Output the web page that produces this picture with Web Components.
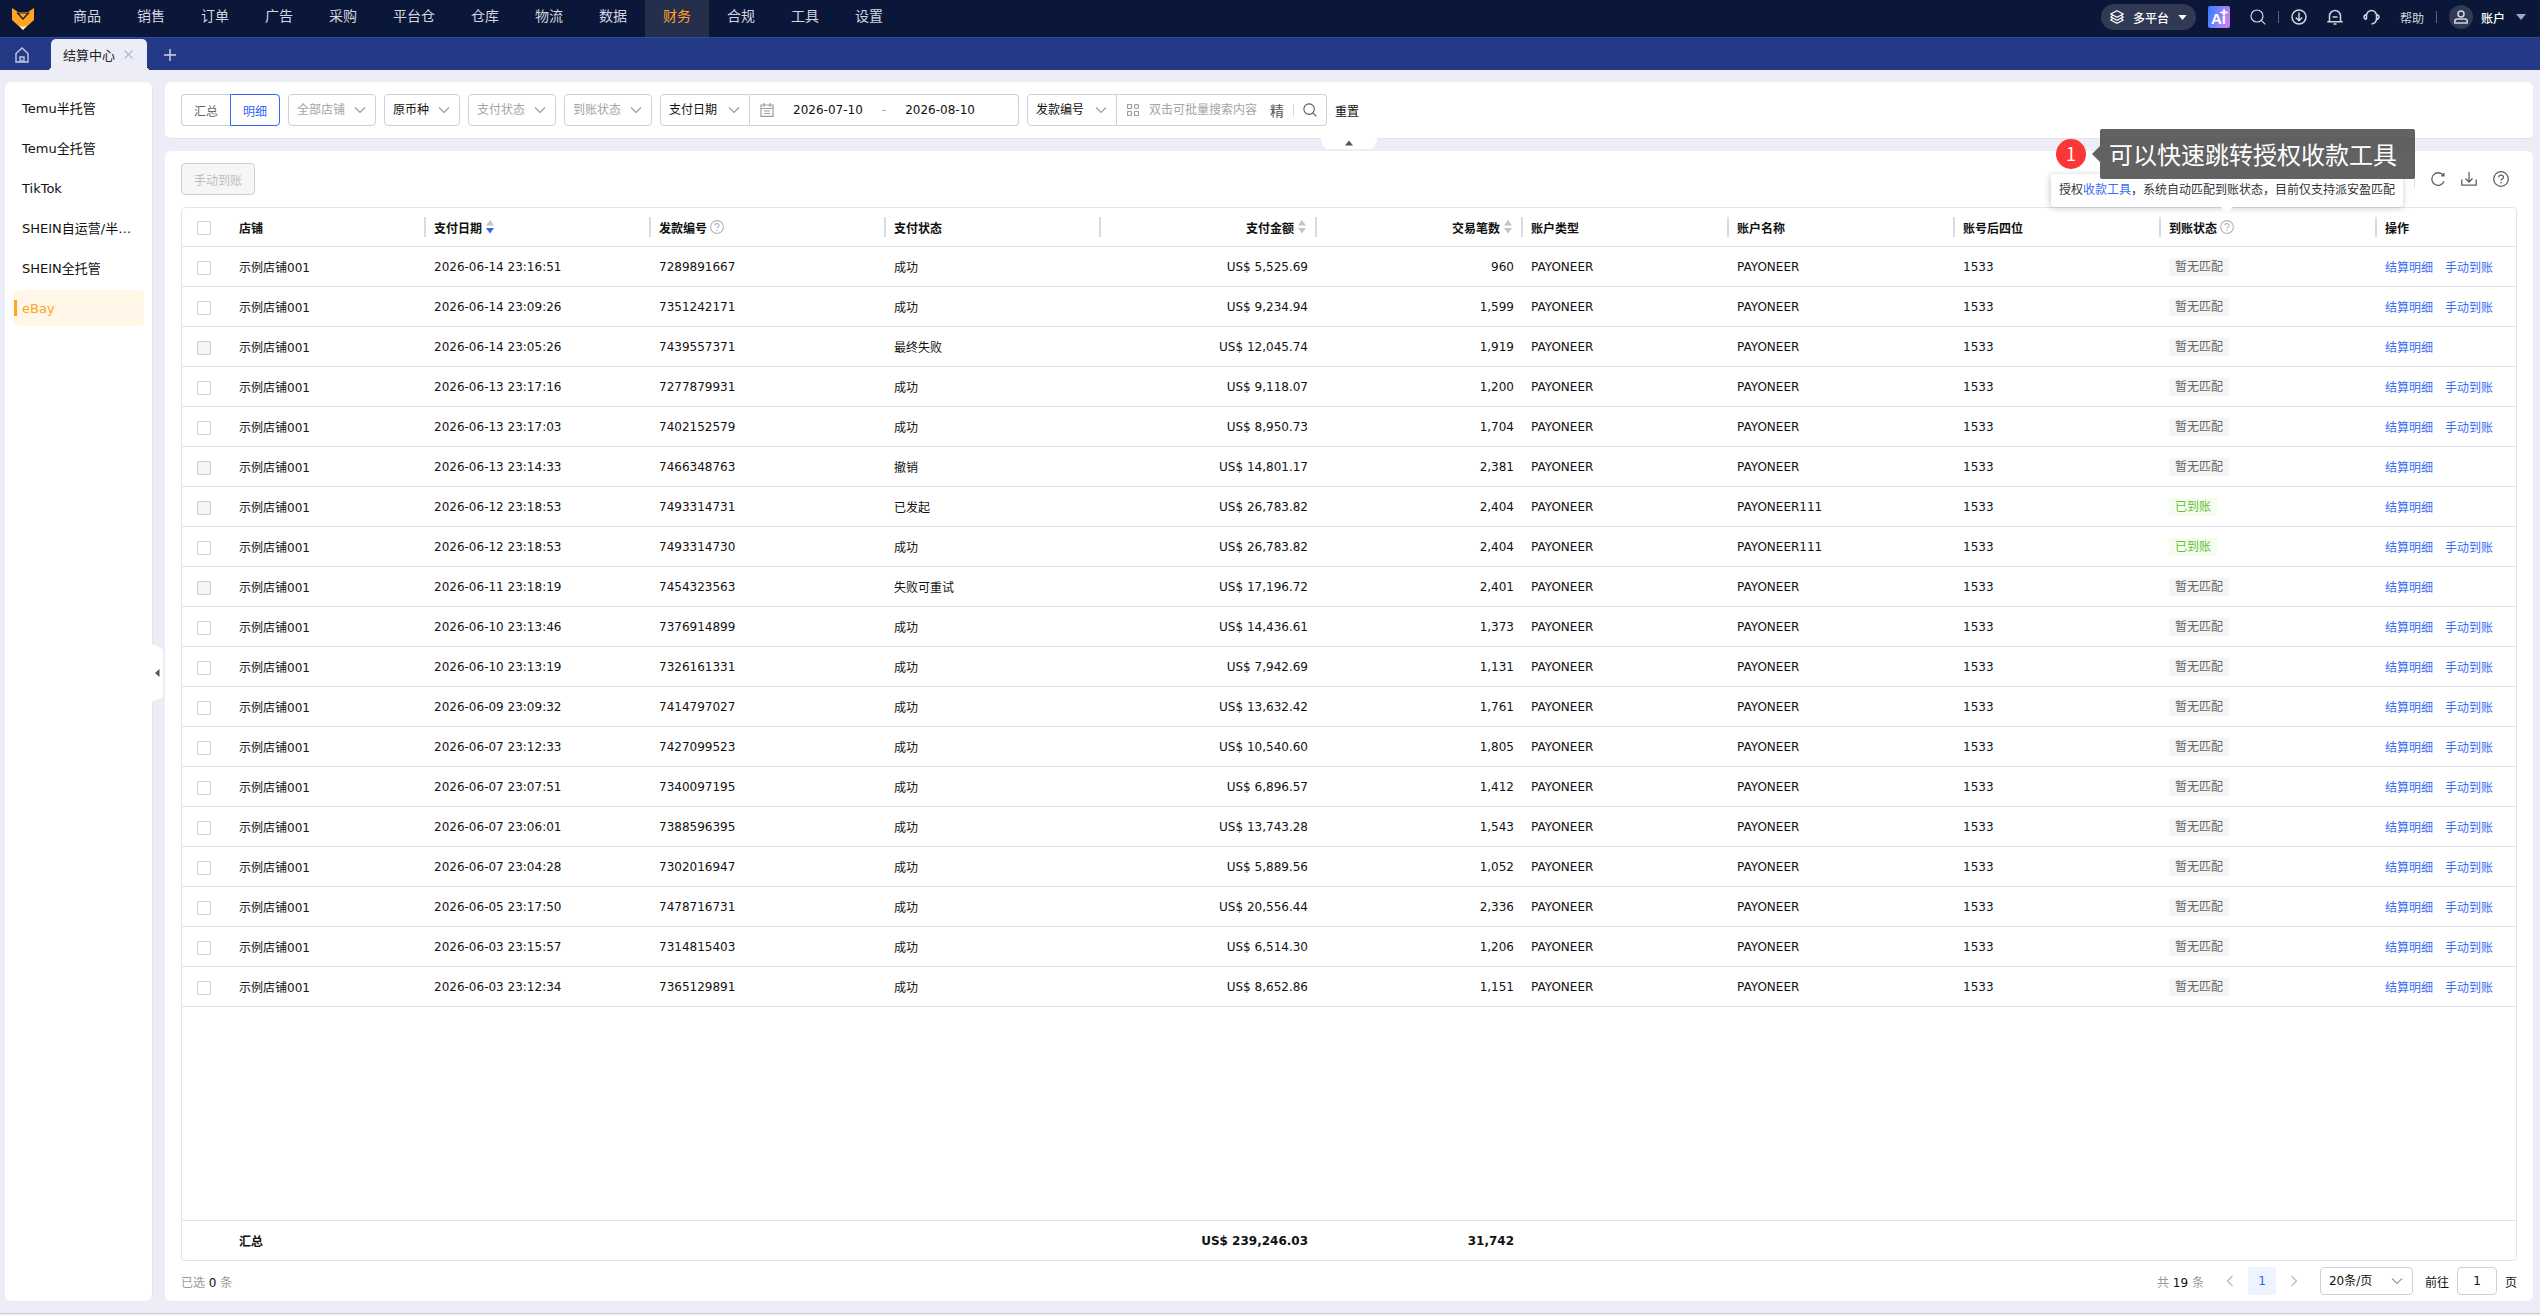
<!DOCTYPE html>
<html lang="zh-CN">
<head>
<meta charset="UTF-8">
<meta name="viewport" content="width=device-width, initial-scale=1">
<title>结算中心</title>
<style>
    html, body {
        margin: 0;
        height: 100%;
    }

    body {
        font-family: "DejaVu Sans", "Noto Sans CJK SC", sans-serif;
        font-size: 12px;
        color: #111;
        background: #ecedf6;
    }
</style>
</head>
<body>
<settlement-page></settlement-page>

<script>
// Shared reset for controls inside every shadow root
const base = `
    * { box-sizing: border-box; }
    button, input, select {
        font: inherit;
        color: inherit;
        margin: 0;
        padding: 0;
        border: 0;
        background: none;
        outline: none;
    }
    button { cursor: pointer; }
    a { color: inherit; text-decoration: none; }
`;

const icons = {
    logo: ['0 0 22 22', `<path fill="#ffa51f" stroke="none" d="M0 0l6 4h10l6-4v12L11 22 0 12z"/><path fill="#fff" stroke="none" d="M7.500 17.500L11 19l3.500-1.500L11 22z"/><path fill="none" stroke="#0b1738" stroke-width="1.2" d="M5.500 5h11L11 11z"/>`],
    home: ['0 0 14 16', `<path d="M1 6.500v8.500h12V6.500L7 1z"/><path d="M5 15v-5h4v5M7 12.500v2.500"/>`],
    close: ['0 0 8 8', `<path d="M.5.5l7 7M7.500.5l-7 7"/>`],
    plus: ['0 0 12 12', `<path d="M6 0v12M0 6h12"/>`],
    layers: ['0 0 14 14', `<path d="M7 .8L13.200 4 7 7.400.8 4zM2.500 5.500L.8 7 7 10.300 13.200 7l-1.700-1.500M2.500 8.500L.8 10 7 13.300 13.200 10l-1.700-1.500"/>`],
    caret: ['0 0 10 6', `<path fill="currentColor" stroke="none" d="M0 0h10L5 6z"/>`],
    search: ['0 0 16 16', `<circle cx="7" cy="7" r="6"/><path d="M11.300 11.300L15.300 15.300"/>`],
    downCircle: ['0 0 16 16', `<circle cx="8" cy="8" r="7"/><path d="M8 3.500v8M4.800 8.500L8 11.700l3.200-3.200"/>`],
    bell: ['0 0 16 16', `<path d="M2.500 12.500V7a5.500 5.500 0 0 1 11 0v5.500M.3 12.800h15.400M5.500 8h5M6.500 15h3"/>`],
    headset: ['0 0 17 16', `<path d="M3.500 10V6.500a5 5 0 0 1 10 0V9.500c0 3-1.500 5-5 5.500M3.500 5.500C1.500 6 1 7 1 8s.5 2 2.500 2.500M13.500 5.500c2 .5 2.500 1.500 2.500 2.500s-.5 2-2.500 2.500"/>`],
    user: ['0 0 14 14', `<circle cx="7" cy="4" r="3"/><path d="M.8 13v-1.500c0-1.500 1-2.500 2.500-2.500h7.400c1.500 0 2.500 1 2.500 2.500V13z"/>`],
    chevron: ['0 0 12 12', `<path d="M1 3.500l5 5 5-5"/>`],
    left: ['0 0 12 12', `<path d="M8.500 1l-5 5 5 5"/>`],
    right: ['0 0 12 12', `<path d="M3.500 1l5 5-5 5"/>`],
    calendar: ['0 0 14 14', `<path d="M1 2h12v11.300H1zM4 0v4M10 0v4M1 5.500h12M4 8h6M4 10.500h6"/>`],
    grid: ['0 0 12 12', `<rect x=".5" y=".5" width="4" height="4" rx=".5"/><rect x="7.500" y=".5" width="4" height="4" rx="1.500"/><rect x=".5" y="7.500" width="4" height="4" rx=".5"/><rect x="7.500" y="7.500" width="4" height="4" rx=".5"/>`],
    help: ['0 0 16 16', `<circle cx="8" cy="8" r="7.300"/><path d="M5.600 6.300C5.600 3.400 10.500 3.400 10.500 6.300 10.500 8 8 8 8 9.800M8 11v1.500"/>`],
    refresh: ['0 0 14 14', `<path d="M12.400 3.600A6.300 6.300 0 1 0 13 9.300M12.900 1v2.900h-2.700"/>`],
    download: ['0 0 16 14', `<path d="M.8 7.500v5.700h14.400V7.500M8 0v9.500M4.500 6.500L8 10l3.500-3.500"/>`],
    sort: ['0 0 14 14', `<path class="up" stroke="none" d="M4 5.500h8L8 0z"/><path class="down" stroke="none" d="M4 8h8l-4 5.500z"/>`]
};

class AppIcon extends HTMLElement {
    constructor() {
        super();
        this.attachShadow({ mode: 'open' });
    }

    connectedCallback() {
        const [box, body] = icons[this.getAttribute('name')];
        const [, , w, h] = box.split(' ');
        const width = this.getAttribute('size') || w;
        const height = Math.round(width * h / w);
        this.shadowRoot.innerHTML = `
      <style>
        :host { display: inline-flex; flex: none; }
        svg { display: block; fill: none; stroke: currentColor; stroke-width: var(--stroke, 1.2); }
        .up { fill: #c0c4cc; }
        .down { fill: var(--sort-down, #c0c4cc); }
      </style>
      <svg viewBox="${box}" width="${width}" height="${height}" aria-hidden="true">${body}</svg>
    `;
    }
}

class TopNav extends HTMLElement {
    constructor() {
        super();
        this.attachShadow({ mode: 'open' });
    }

    connectedCallback() {
        const items = ['商品', '销售', '订单', '广告', '采购', '平台仓', '仓库', '物流', '数据', '财务', '合规', '工具', '设置'];
        this.shadowRoot.innerHTML = `
      <style>
        ${base}
        :host {
          display: flex;
          align-items: center;
          height: 37px;
          padding: 0 14px 0 12px;
          background: #0b1738;
          color: #d3d6df;
        }
        nav { display: flex; flex: 1; margin-left: 21px; font-size: 14px; }
        nav a { padding: 0 18px; line-height: 33px; height: 37px; }
        nav a.active { background: #252f4c; color: #ff9f2e; }
        .tools { display: flex; align-items: center; height: 34px; margin-bottom: 3px; }
        .pill {
          display: flex;
          align-items: center;
          gap: 9px;
          height: 26px;
          padding: 0 9px;
          border-radius: 13px;
          background: #303a54;
          color: #fff;
          font-weight: 500;
          margin-right: 12px;
        }
        .ai { display: block; margin-right: 20px; }
        .line { width: 1px; height: 12px; background: #5a6279; margin: 0 12px; }
        .icons { display: flex; gap: 20px; align-items: center; --stroke: 1.5; }
        .avatar {
          display: flex;
          align-items: center;
          justify-content: center;
          width: 24px;
          height: 24px;
          border-radius: 50%;
          background: #303a54;
          margin-right: 8px;
          --stroke: 1.5;
        }
        .account { color: #fff; font-weight: 500; margin-right: 11px; }
        .dim { color: #a3a8b6; }
      </style>
      <app-icon name="logo"></app-icon>
      <nav>${items.map(t => `<a href="#"${t === '财务' ? ' class="active"' : ''}>${t}</a>`).join('')}</nav>
      <div class="tools">
        <button class="pill"><app-icon name="layers" size="14"></app-icon>多平台<app-icon name="caret" size="9"></app-icon></button>
        <svg class="ai" width="22" height="22" viewBox="0 0 22 22" role="img" aria-label="AI">
          <defs><linearGradient id="g" x1="0" y1="0" x2="1" y2="0.3">
            <stop offset="0" stop-color="#2f7bff"/><stop offset=".55" stop-color="#7a86ff"/><stop offset="1" stop-color="#c77df0"/>
          </linearGradient></defs>
          <rect width="22" height="22" rx="2" fill="url(#g)"/>
          <text x="3" y="18" fill="#fff" font-family="Liberation Sans, sans-serif" font-size="15" font-weight="700">Ai</text>
          <path fill="#fff" d="M16 2l1.200 3.300 3.300 1.200-3.300 1.200L16 11l-1.200-3.300-3.300-1.200 3.300-1.200z"/>
        </svg>
        <app-icon name="search" size="16"></app-icon>
        <span class="line"></span>
        <div class="icons">
          <app-icon name="downCircle" size="16"></app-icon>
          <app-icon name="bell" size="16"></app-icon>
          <app-icon name="headset" size="17"></app-icon>
          <a href="#">帮助</a>
        </div>
        <span class="line"></span>
        <span class="avatar"><app-icon name="user" size="14"></app-icon></span>
        <span class="account">账户</span>
        <app-icon class="dim" name="caret" size="10"></app-icon>
      </div>
    `;
    }
}

class TabStrip extends HTMLElement {
    constructor() {
        super();
        this.attachShadow({ mode: 'open' });
    }

    connectedCallback() {
        this.shadowRoot.innerHTML = `
      <style>
        ${base}
        :host {
          display: flex;
          align-items: flex-end;
          height: 33px;
          border-top: 1px solid #2f4aa0;
          background: #243a86;
          color: #d3d6df;
        }
        button { display: flex; align-items: center; justify-content: center; height: 31px; --stroke: 1.4; }
        .home { width: 44px; margin-right: 7px; color: #c3cae4; }
        .tab {
          position: relative;
          display: flex;
          align-items: center;
          gap: 9px;
          height: 31px;
          padding: 0 14px 0 12px;
          border-radius: 5px 5px 0 0;
          background: #ecedf6;
          color: #222;
          font-size: 13px;
        }
        .tab button { color: #b3b8cc; --stroke: 1.1; }
        .tab::before, .tab::after {
          content: "";
          position: absolute;
          bottom: 0;
          width: 4px;
          height: 4px;
        }
        .tab::before { right: 100%; background: radial-gradient(circle at 0 0, transparent 4px, #ecedf6 4px); }
        .tab::after { left: 100%; background: radial-gradient(circle at 100% 0, transparent 4px, #ecedf6 4px); }
        .add { width: 46px; }
      </style>
      <button class="home" aria-label="首页"><app-icon name="home" size="14"></app-icon></button>
      <div class="tab"><span>结算中心</span><button aria-label="关闭"><app-icon name="close" size="9"></app-icon></button></div>
      <button class="add" aria-label="新建"><app-icon name="plus" size="12"></app-icon></button>
    `;
    }
}

class SideMenu extends HTMLElement {
    constructor() {
        super();
        this.attachShadow({ mode: 'open' });
    }

    connectedCallback() {
        const items = ['Temu半托管', 'Temu全托管', 'TikTok', 'SHEIN自运营/半托管', 'SHEIN全托管', 'eBay'];
        this.shadowRoot.innerHTML = `
      <style>
        ${base}
        :host {
          position: relative;
          display: flex;
          flex-direction: column;
          gap: 4px;
          width: 148px;
          box-sizing: border-box;
          padding: 8px 7px 8px 8px;
          border-radius: 6px;
          border-right: 1px solid #e2e4ee;
          background: #fff;
          font-size: 13px;
        }
        a {
          height: 36px;
          line-height: 37px;
          margin: 0 1px;
          padding: 0 8px;
          border-radius: 4px;
          overflow: hidden;
          text-overflow: ellipsis;
          white-space: nowrap;
        }
        a.active {
          color: #ffa51f;
          background: linear-gradient(#ffa51f, #ffa51f) left center / 3px 16px no-repeat #fff6e7;
        }
        /* collapse handle hangs over the gap beside the card */
        .handle { position: absolute; left: 100%; top: calc(50% - 48px); width: 11px; height: 58px; }
        svg { display: block; }
      </style>
      ${items.map(t => `<a href="#"${t === 'eBay' ? ' class="active"' : ''}>${t}</a>`).join('')}
      <button class="handle" aria-label="收起菜单">
        <svg width="11" height="58" viewBox="0 0 11 58"><path fill="#fff" d="M0 0l7 3q4 1.500 4 5v42q0 3.500-4 5l-7 3z"/><path fill="#555" d="M7.500 25v8L3 29z"/></svg>
      </button>
    `;
    }
}

class SelectBox extends HTMLElement {
    constructor() {
        super();
        this.attachShadow({ mode: 'open' });
    }

    connectedCallback() {
        const label = this.getAttribute('label');
        this.shadowRoot.innerHTML = `
      <style>
        ${base}
        :host { display: block; height: 32px; }
        :host([muted]) { color: #a2a4aa; }
        div {
          display: grid;
          align-items: center;
          height: 100%;
          border: 1px solid #cdd0da;
          border-radius: var(--radius, 4px);
          background: #fff;
        }
        select, app-icon { grid-area: 1 / 1; }
        select { appearance: none; width: 100%; height: 100%; padding: 0 29px 0 8px; }
        app-icon { justify-self: end; margin-right: 9px; color: #9a9da6; pointer-events: none; }
      </style>
      <div>
        <select aria-label="${label}"><option>${label}</option></select>
        <app-icon name="chevron" size="12"></app-icon>
      </div>
    `;
    }
}

class FilterBar extends HTMLElement {
    constructor() {
        super();
        this.attachShadow({ mode: 'open' });
    }

    connectedCallback() {
        this.shadowRoot.innerHTML = `
      <style>
        ${base}
        :host {
          position: relative;
          display: flex;
          align-items: center;
          gap: 8px;
          padding: 12px 16px;
          border-radius: 6px;
          border-bottom: 1px solid #e2e4ea;
          background: #fff;
        }
        .group, .joined { display: flex; }
        .group button { width: 49px; height: 32px; border: 1px solid #cdd0da; color: #666; }
        .group button:first-child { border-radius: 4px 0 0 4px; border-right: 0; }
        .group button:last-child { width: 50px; border-radius: 0 4px 4px 0; border-color: #2f66f5; color: #2f66f5; }
        .joined select-box { --radius: 4px 0 0 4px; width: 90px; }
        .field {
          display: flex;
          align-items: center;
          height: 32px;
          border: 1px solid #cdd0da;
          border-left: 0;
          border-radius: 0 4px 4px 0;
        }
        .range { width: 269px; padding: 0 24px 0 10px; }
        .range app-icon { color: #9a9da6; }
        .range input { flex: 1; min-width: 0; text-align: center; }
        .range span { color: #999; }
        .search { width: 210px; padding: 0 9px 0 10px; color: #555; }
        .search .grid { color: #9a9da6; margin-right: 10px; }
        .search input { flex: 1; min-width: 0; }
        .search input::placeholder { color: #a2a4aa; opacity: 1; }
        .search .exact { font-size: 14px; margin-left: 8px; }
        .search i { width: 1px; height: 12px; background: #d5d8de; margin: 0 9px; }
        .search button { display: flex; }
        .fold { position: absolute; left: calc(50% - 29px); top: 100%; width: 58px; height: 12px; }
        svg { display: block; }
      </style>
      <div class="group"><button>汇总</button><button>明细</button></div>
      <select-box label="全部店铺" muted></select-box>
      <select-box label="原币种"></select-box>
      <select-box label="支付状态" muted></select-box>
      <select-box label="到账状态" muted></select-box>
      <div class="joined">
        <select-box label="支付日期"></select-box>
        <div class="field range">
          <app-icon name="calendar" size="14"></app-icon>
          <input aria-label="开始日期" value="2026-07-10"><span>-</span><input aria-label="结束日期" value="2026-08-10">
        </div>
      </div>
      <div class="joined">
        <select-box label="发款编号"></select-box>
        <div class="field search">
          <app-icon class="grid" name="grid" size="12"></app-icon>
          <input aria-label="搜索内容" placeholder="双击可批量搜索内容">
          <button class="exact">精</button><i></i>
          <button aria-label="搜索"><app-icon name="search" size="14"></app-icon></button>
        </div>
      </div>
      <button>重置</button>
      <button class="fold" aria-label="收起筛选">
        <svg width="58" height="12" viewBox="0 0 58 12"><path fill="#fff" d="M0-1h58l-3 8q-1.500 4-5 4H8q-3.500 0-5-4z"/><path fill="#555" d="M25 7.500h8L29 2.500z"/></svg>
      </button>
    `;
    }
}

// Bubble shown above whatever it is placed in, arrow pointing down
class HintPopover extends HTMLElement {
    constructor() {
        super();
        this.attachShadow({ mode: 'open' });
        this.shadowRoot.innerHTML = `
      <style>
        :host {
          position: absolute;
          left: 50%;
          bottom: calc(100% + 13px);
          transform: translateX(-50%);
          z-index: 2;
          padding: 0 8px;
          line-height: 33px;
          border-radius: 4px;
          background: #fff;
          box-shadow: 0 1px 6px rgba(40, 50, 80, .25);
          color: #333;
          font-weight: 400;
          white-space: nowrap;
        }
        :host::after {
          content: "";
          position: absolute;
          left: calc(50% - 6px);
          top: 100%;
          border: 6px solid transparent;
          border-top-color: #fff;
          border-bottom: 0;
        }
      </style>
      <slot></slot>
    `;
    }
}

const columns = [
    { width: 49, check: true },
    { width: 195, title: '店铺' },
    { width: 225, title: '支付日期', sort: 'desc' },
    { width: 235, title: '发款编号', help: true },
    { width: 215, title: '支付状态' },
    { width: 216, title: '支付金额', sort: 'none', right: true },
    { width: 206, title: '交易笔数', sort: 'none', right: true },
    { width: 206, title: '账户类型' },
    { width: 226, title: '账户名称' },
    { width: 206, title: '账号后四位' },
    { width: 216, title: '到账状态', help: true, hint: true },
    { width: 139, title: '操作' }
];

// date, number, state, amount, count, account name, arrived
const payouts = [
    ['2026-06-14 23:16:51', '7289891667', '成功', '5,525.69', '960', 'PAYONEER', false],
    ['2026-06-14 23:09:26', '7351242171', '成功', '9,234.94', '1,599', 'PAYONEER', false],
    ['2026-06-14 23:05:26', '7439557371', '最终失败', '12,045.74', '1,919', 'PAYONEER', false],
    ['2026-06-13 23:17:16', '7277879931', '成功', '9,118.07', '1,200', 'PAYONEER', false],
    ['2026-06-13 23:17:03', '7402152579', '成功', '8,950.73', '1,704', 'PAYONEER', false],
    ['2026-06-13 23:14:33', '7466348763', '撤销', '14,801.17', '2,381', 'PAYONEER', false],
    ['2026-06-12 23:18:53', '7493314731', '已发起', '26,783.82', '2,404', 'PAYONEER111', true],
    ['2026-06-12 23:18:53', '7493314730', '成功', '26,783.82', '2,404', 'PAYONEER111', true],
    ['2026-06-11 23:18:19', '7454323563', '失败可重试', '17,196.72', '2,401', 'PAYONEER', false],
    ['2026-06-10 23:13:46', '7376914899', '成功', '14,436.61', '1,373', 'PAYONEER', false],
    ['2026-06-10 23:13:19', '7326161331', '成功', '7,942.69', '1,131', 'PAYONEER', false],
    ['2026-06-09 23:09:32', '7414797027', '成功', '13,632.42', '1,761', 'PAYONEER', false],
    ['2026-06-07 23:12:33', '7427099523', '成功', '10,540.60', '1,805', 'PAYONEER', false],
    ['2026-06-07 23:07:51', '7340097195', '成功', '6,896.57', '1,412', 'PAYONEER', false],
    ['2026-06-07 23:06:01', '7388596395', '成功', '13,743.28', '1,543', 'PAYONEER', false],
    ['2026-06-07 23:04:28', '7302016947', '成功', '5,889.56', '1,052', 'PAYONEER', false],
    ['2026-06-05 23:17:50', '7478716731', '成功', '20,556.44', '2,336', 'PAYONEER', false],
    ['2026-06-03 23:15:57', '7314815403', '成功', '6,514.30', '1,206', 'PAYONEER', false],
    ['2026-06-03 23:12:34', '7365129891', '成功', '8,652.86', '1,151', 'PAYONEER', false]
];

class PayoutTable extends HTMLElement {
    constructor() {
        super();
        this.attachShadow({ mode: 'open' });
    }

    connectedCallback() {
        this.render();
    }

    headCell(col) {
        if (col.check) return '<th class="check"><input type="checkbox" aria-label="全选"></th>';
        const sort = col.sort ? `<app-icon name="sort" size="14" class="${col.sort}"></app-icon>` : '';
        const hint = col.hint
            ? '<hint-popover>授权<a href="#">收款工具</a>，系统自动匹配到账状态，目前仅支持派安盈匹配</hint-popover>'
            : '';
        const help = col.help ? `<span class="help"><app-icon name="help" size="14"></app-icon>${hint}</span>` : '';
        return `<th${col.right ? ' class="right"' : ''}><span class="title">${col.title}${sort}${help}</span></th>`;
    }

    row([date, number, state, amount, count, name, arrived]) {
        const ok = state === '成功';
        return `<tr>
          <td class="check"><input type="checkbox" aria-label="选择 ${number}"${ok ? '' : ' disabled'}></td>
          <td>示例店铺001</td>
          <td>${date}</td>
          <td>${number}</td>
          <td>${state}</td>
          <td class="right">US$ ${amount}</td>
          <td class="right">${count}</td>
          <td>PAYONEER</td>
          <td>${name}</td>
          <td>1533</td>
          <td><span class="tag${arrived ? ' done' : ''}">${arrived ? '已到账' : '暂无匹配'}</span></td>
          <td class="links"><a href="#">结算明细</a>${ok ? '<a href="#">手动到账</a>' : ''}</td>
        </tr>`;
    }

    render() {
        const cols = `<colgroup>${columns.map(c => `<col style="width:${c.width}px">`).join('')}</colgroup>`;
        this.shadowRoot.innerHTML = `
      <style>
        ${base}
        :host {
          display: flex;
          flex-direction: column;
          border: 1px solid #e2e4ea;
          border-radius: 4px;
        }
        .body { flex: 1; }
        table { width: 100%; table-layout: fixed; border-spacing: 0; }
        th, td { height: 40px; padding: 0 8px; text-align: left; white-space: nowrap; border-bottom: 1px solid #e2e4ea; }
        th { height: 39px; background: linear-gradient(#d8dbe1, #d8dbe1) right center / 2px 20px no-repeat; }
        th.check, th:last-child { background: none; }
        .check { padding: 2px 0 0 15px; }
        .right { text-align: right; padding-right: 9px; }
        .title { display: inline-flex; align-items: center; vertical-align: middle; }
        .desc { --sort-down: #2f66f5; }
        .help { position: relative; display: inline-flex; margin-left: 3px; }
        .help app-icon { color: #b0b3bb; }
        hint-popover a, .links a { color: #3a6cf6; }
        input[type=checkbox] {
          appearance: none;
          display: block;
          width: 14px;
          height: 14px;
          border: 1px solid #cbd2e0;
          border-radius: 2px;
          background: #fff;
        }
        input[type=checkbox]:disabled { background: #f5f5f5; border-color: #cdced4; }
        .tag {
          display: inline-block;
          height: 18px;
          line-height: 18px;
          padding: 0 6px;
          border-radius: 2px;
          background: #f4f5f7;
          color: #666;
        }
        .tag.done { background: #f5fdee; color: #67bf3e; }
        .links a + a { margin-left: 12px; }
        .sum td { height: 40px; border-top: 1px solid #e2e4ea; border-bottom: 0; font-weight: 700; }
      </style>
      <div class="body">
        <table>
          ${cols}
          <thead><tr>${columns.map(c => this.headCell(c)).join('')}</tr></thead>
          <tbody>${payouts.map(p => this.row(p)).join('')}</tbody>
        </table>
      </div>
      <table class="sum">
        ${cols}
        <tbody><tr>
          <td></td><td>汇总</td><td></td><td></td><td></td>
          <td class="right">US$ 239,246.03</td><td class="right">31,742</td>
          <td></td><td></td><td></td><td></td><td></td>
        </tr></tbody>
      </table>
    `;
    }
}

class PagerBar extends HTMLElement {
    constructor() {
        super();
        this.attachShadow({ mode: 'open' });
    }

    connectedCallback() {
        this.shadowRoot.innerHTML = `
      <style>
        ${base}
        :host { display: flex; align-items: center; height: 40px; }
        .muted { color: #999; white-space: pre; }
        b { font-weight: 400; color: #111; }
        .picked { flex: 1; }
        .pages { display: flex; gap: 4px; margin: 0 12px; }
        .pages button {
          display: flex;
          align-items: center;
          justify-content: center;
          width: 28px;
          height: 28px;
          border-radius: 2px;
          color: #b5b8c0;
        }
        .pages .on { background: #edf3ff; color: #2f66f5; }
        select-box { width: 93px; height: 28px; margin-right: 12px; }
        label { display: flex; align-items: center; gap: 8px; }
        input { width: 40px; height: 28px; border: 1px solid #cdd0da; border-radius: 4px; text-align: center; }
      </style>
      <span class="muted picked">已选 <b>0</b> 条</span>
      <span class="muted">共 <b>19</b> 条</span>
      <div class="pages">
        <button aria-label="上一页"><app-icon name="left" size="12"></app-icon></button>
        <button class="on">1</button>
        <button aria-label="下一页"><app-icon name="right" size="12"></app-icon></button>
      </div>
      <select-box label="20条/页"></select-box>
      <label>前往<input value="1">页</label>
    `;
    }
}

// Numbered callout laid over the page
class StepNote extends HTMLElement {
    constructor() {
        super();
        this.attachShadow({ mode: 'open' });
        this.shadowRoot.innerHTML = `
      <style>
        :host { display: flex; align-items: center; color: #fff; font-family: "Noto Sans CJK SC", sans-serif; }
        .num {
          width: 30px;
          height: 30px;
          border-radius: 50%;
          background: #fb3636;
          font-size: 18px;
          line-height: 28px;
          text-align: center;
          margin-right: 6px;
        }
        .arrow { border: 8px solid transparent; border-right-color: rgba(72, 72, 72, .86); border-left: 0; }
        .text {
          height: 50px;
          line-height: 50px;
          padding: 0 18px 0 9px;
          border-radius: 2px;
          background: rgba(72, 72, 72, .86);
          font-size: 24px;
        }
      </style>
      <span class="num"><slot name="num"></slot></span>
      <span class="arrow"></span>
      <span class="text"><slot></slot></span>
    `;
    }
}

class SettlementPage extends HTMLElement {
    constructor() {
        super();
        this.attachShadow({ mode: 'open' });
    }

    connectedCallback() {
        this.shadowRoot.innerHTML = `
      <style>
        ${base}
        :host {
          position: relative;
          display: flex;
          flex-direction: column;
          min-height: 100vh;
          background: #ecedf6;
        }
        .content { display: flex; flex: 1; gap: 12px; padding: 12px 7px 12px 5px; }
        main { display: flex; flex: 1; flex-direction: column; gap: 12px; min-width: 0; }
        .card { display: flex; flex: 1; flex-direction: column; padding: 12px 16px 0; border-radius: 6px; background: #fff; }
        .toolbar { display: flex; align-items: center; margin-bottom: 12px; }
        .manual {
          height: 32px;
          padding: 0 12px;
          border: 1px solid #cdd0da;
          border-radius: 4px;
          background: #f6f6f7;
          color: #bcbec4;
        }
        .actions { display: flex; align-items: center; gap: 16px; margin-left: auto; padding-right: 8px; color: #5d6066; --stroke: 1.3; }
        .actions i { width: 1px; height: 18px; background: #dfe1e6; }
        .actions button { display: flex; color: inherit; }
        payout-table { flex: 1; }
        .edge { height: 3px; border-top: 1px solid #c6c7cc; background: #f4f4f7; }
        step-note { position: absolute; right: 125px; top: 129px; z-index: 5; }
      </style>
      <top-nav></top-nav>
      <tab-strip></tab-strip>
      <div class="content">
        <side-menu></side-menu>
        <main>
          <filter-bar></filter-bar>
          <div class="card">
            <div class="toolbar">
              <button class="manual" disabled>手动到账</button>
              <div class="actions">
                <i></i>
                <button aria-label="刷新"><app-icon name="refresh" size="14"></app-icon></button>
                <button aria-label="下载"><app-icon name="download" size="16"></app-icon></button>
                <button aria-label="帮助"><app-icon name="help" size="16"></app-icon></button>
              </div>
            </div>
            <payout-table></payout-table>
            <pager-bar></pager-bar>
          </div>
        </main>
      </div>
      <div class="edge"></div>
      <step-note><span slot="num">1</span>可以快速跳转授权收款工具</step-note>
    `;
    }
}

customElements.define('app-icon', AppIcon);
customElements.define('top-nav', TopNav);
customElements.define('tab-strip', TabStrip);
customElements.define('side-menu', SideMenu);
customElements.define('select-box', SelectBox);
customElements.define('filter-bar', FilterBar);
customElements.define('hint-popover', HintPopover);
customElements.define('payout-table', PayoutTable);
customElements.define('pager-bar', PagerBar);
customElements.define('step-note', StepNote);
customElements.define('settlement-page', SettlementPage);
</script>
</body>
</html>
